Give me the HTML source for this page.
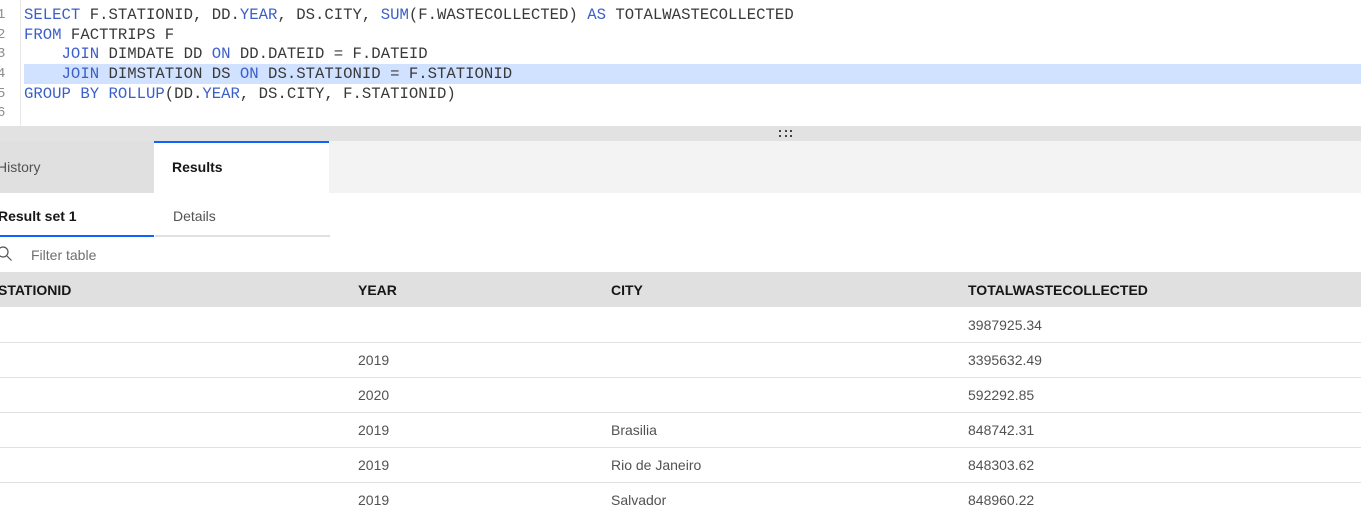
<!DOCTYPE html>
<html><head><style>
*{margin:0;padding:0;box-sizing:border-box}
body{width:1361px;height:513px;overflow:hidden;background:#fff;font-family:"Liberation Sans",sans-serif;position:relative}
.ed{position:absolute;left:0;top:0;width:1361px;height:126px;background:#fff}
.gut{position:absolute;left:0;top:0;width:21px;height:126px;border-right:1px solid #e8e8e8}
.ln{position:absolute;left:-3px;font:14px "Liberation Mono",monospace;color:#8d8d8d}
.code{position:absolute;left:24px;font:15.65px/19.7px "Liberation Mono",monospace;color:#393939;white-space:pre}
.k{color:#3b5fc9}
.hl{position:absolute;left:24px;top:64px;width:1337px;height:20px;background:#d0e2ff}
.split{position:absolute;left:0;top:126px;width:1361px;height:15px;background:#e2e2e2}
.dot{position:absolute;width:2px;height:2px;background:#444}
.tabs{position:absolute;left:0;top:141px;width:1361px;height:52px;background:#f3f3f3}
.t{position:absolute;top:0;height:52px;font-size:14px;line-height:52px;padding-left:0}
.sub{position:absolute;top:193px;height:44px;font-size:14px;line-height:46px}
.cell{position:absolute;font-size:14px;color:#525252}
.hd{position:absolute;left:0;top:272px;width:1361px;height:35px;background:#e0e0e0}
.h{position:absolute;top:282px;font-size:14px;font-weight:bold;color:#161616}
.rl{position:absolute;left:0;width:1361px;height:1px;background:#e0e0e0}
</style></head><body>
<div class="ed">
<div class="gut"></div>
<div class="hl"></div>
<div class="ln" style="top:7px">1</div><div class="ln" style="top:27px">2</div><div class="ln" style="top:46px">3</div><div class="ln" style="top:66px">4</div><div class="ln" style="top:86px">5</div><div class="ln" style="top:105px">6</div>
<div class="code" style="top:6px"><span class="k">SELECT</span> F.STATIONID, DD.<span class="k">YEAR</span>, DS.CITY, <span class="k">SUM</span>(F.WASTECOLLECTED) <span class="k">AS</span> TOTALWASTECOLLECTED
<span class="k">FROM</span> FACTTRIPS F
    <span class="k">JOIN</span> DIMDATE DD <span class="k">ON</span> DD.DATEID = F.DATEID
    <span class="k">JOIN</span> DIMSTATION DS <span class="k">ON</span> DS.STATIONID = F.STATIONID
<span class="k">GROUP BY ROLLUP</span>(DD.<span class="k">YEAR</span>, DS.CITY, F.STATIONID)
</div>
</div>
<div class="split">
<div class="dot" style="left:779px;top:4px"></div><div class="dot" style="left:785px;top:4px"></div><div class="dot" style="left:790px;top:4px"></div>
<div class="dot" style="left:779px;top:9px"></div><div class="dot" style="left:785px;top:9px"></div><div class="dot" style="left:790px;top:9px"></div>
</div>
<div class="tabs">
<div class="t" style="left:0;width:154px;background:#e0e0e0;color:#525252;text-indent:-3px">History</div>
<div class="t" style="left:154px;width:175px;background:#fff;border-top:2px solid #0f62fe;line-height:48px;font-weight:bold;color:#161616;padding-left:18px">Results</div>
</div>
<div class="sub" style="left:0;width:154px;border-bottom:2px solid #0f62fe;font-weight:bold;color:#161616;text-indent:-2px">Result set 1</div>
<div class="sub" style="left:155px;width:175px;border-bottom:2px solid #e0e0e0;color:#525252;padding-left:18px">Details</div>
<svg style="position:absolute;left:-3px;top:246px" width="16" height="16" viewBox="0 0 16 16"><circle cx="6" cy="6" r="5" fill="none" stroke="#525252" stroke-width="1.2"/><path d="M10 10l4.5 4.5" stroke="#525252" stroke-width="1.2"/></svg>
<div class="cell" style="left:31px;top:247px;color:#6f6f6f">Filter table</div>
<div class="hd"></div>
<div class="h" style="left:-2px">STATIONID</div><div class="h" style="left:358px">YEAR</div><div class="h" style="left:611px">CITY</div><div class="h" style="left:968px">TOTALWASTECOLLECTED</div>
<div class="rl" style="top:342px"></div><div class="rl" style="top:377px"></div><div class="rl" style="top:412px"></div><div class="rl" style="top:447px"></div><div class="rl" style="top:482px"></div>
<div class="cell" style="left:968px;top:317px">3987925.34</div>
<div class="cell" style="left:358px;top:352px">2019</div><div class="cell" style="left:968px;top:352px">3395632.49</div>
<div class="cell" style="left:358px;top:387px">2020</div><div class="cell" style="left:968px;top:387px">592292.85</div>
<div class="cell" style="left:358px;top:422px">2019</div><div class="cell" style="left:611px;top:422px">Brasilia</div><div class="cell" style="left:968px;top:422px">848742.31</div>
<div class="cell" style="left:358px;top:457px">2019</div><div class="cell" style="left:611px;top:457px">Rio de Janeiro</div><div class="cell" style="left:968px;top:457px">848303.62</div>
<div class="cell" style="left:358px;top:492px">2019</div><div class="cell" style="left:611px;top:492px">Salvador</div><div class="cell" style="left:968px;top:492px">848960.22</div>
</body></html>
